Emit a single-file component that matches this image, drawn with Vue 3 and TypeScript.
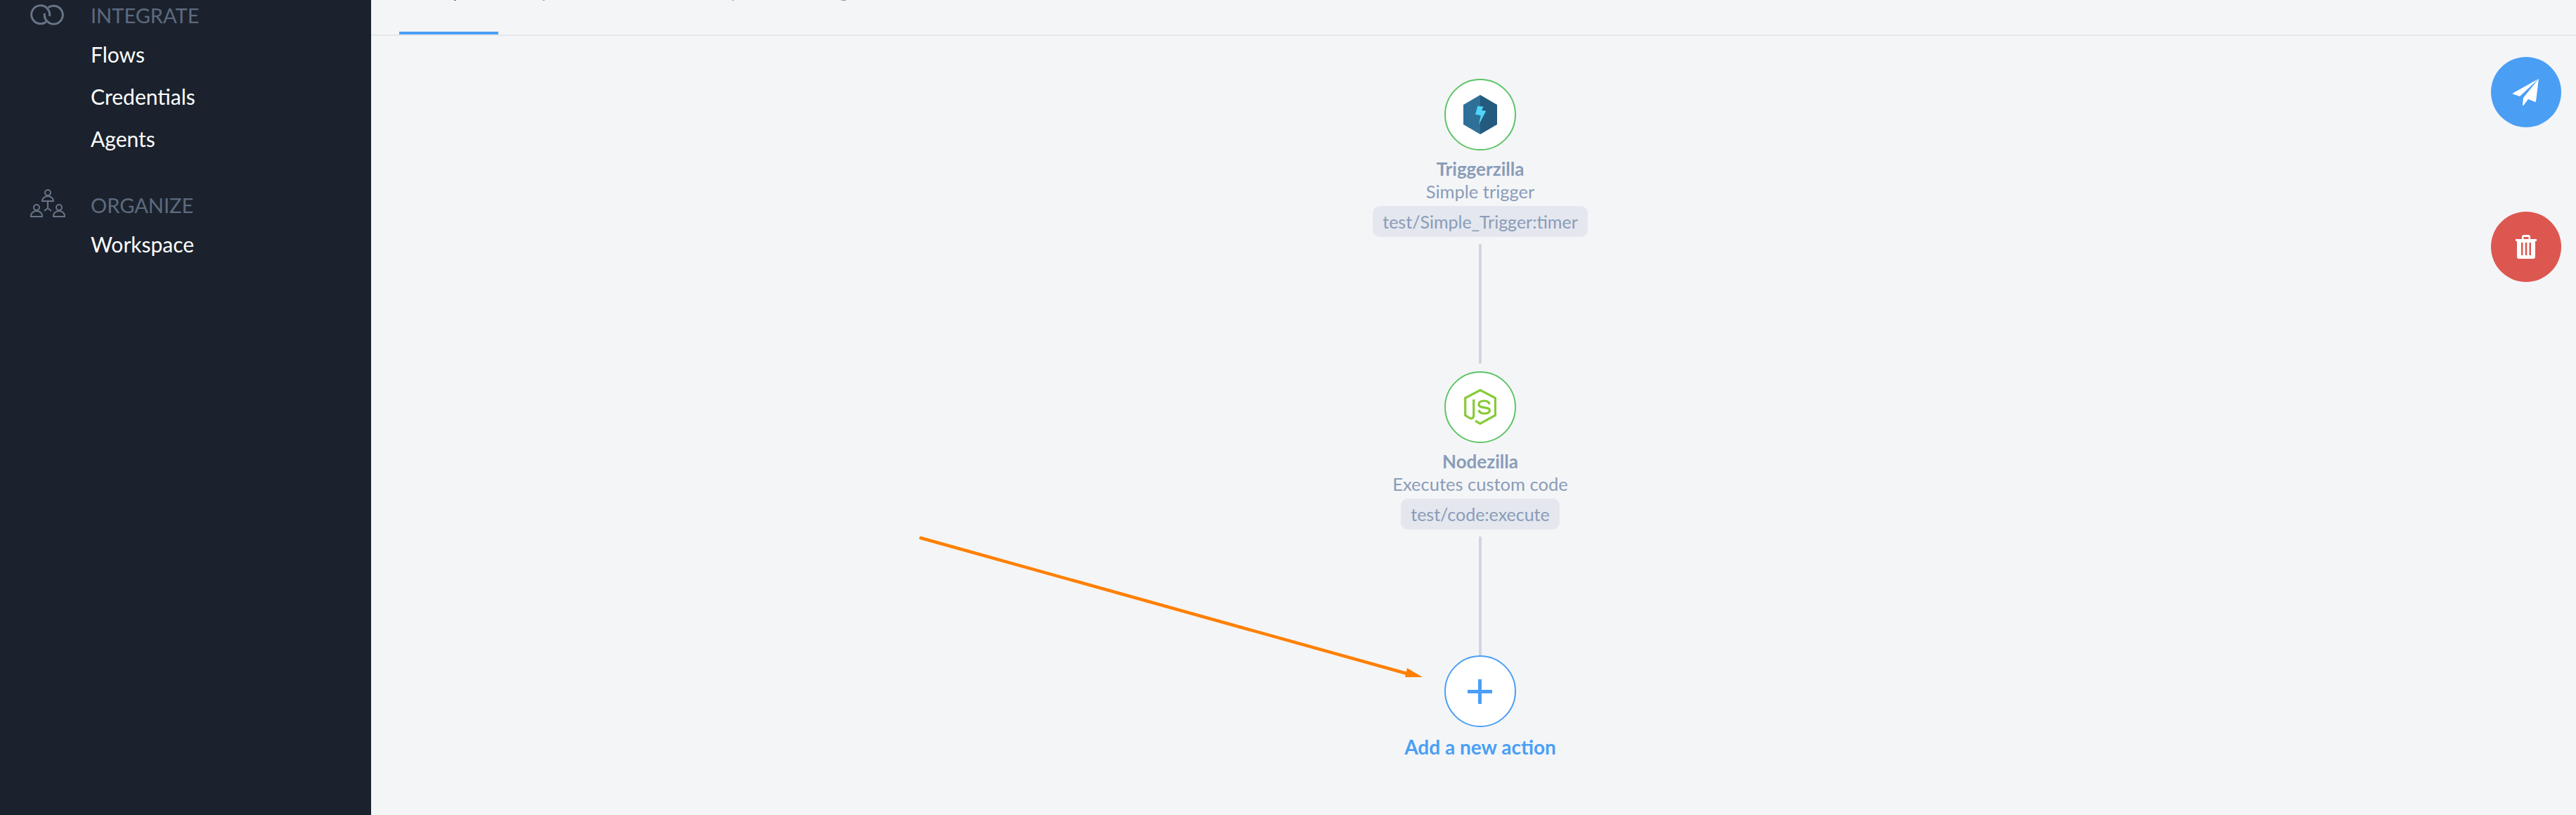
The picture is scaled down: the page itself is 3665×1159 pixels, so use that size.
<template>
  <div class="page">
    <aside class="sidebar">
      <section v-for="group in navGroups" :key="group.title" class="nav-group">
        <div class="nav-title">
          <span class="nav-icon">
            <svg v-if="group.icon === 'rings'" width="48" height="30" viewBox="0 0 48 30" fill="none" stroke="#687487" stroke-width="3">
              <path d="M22.500 25.200A13 13 0 1 1 27.500 17" />
              <path d="M25.500 4.800A13 13 0 1 1 20.500 13" />
            </svg>
            <svg v-else width="50" height="40" viewBox="0 0 50 40" fill="none" stroke="#687487" stroke-width="2">
              <circle cx="25" cy="5" r="4" />
              <path d="M17 17a8 7 0 0 1 16 0z" />
              <circle cx="9" cy="26" r="4" />
              <path d="M1 39v-1a8 7 0 0 1 16 0v1z" />
              <circle cx="41" cy="26" r="4" />
              <path d="M33 39v-1a8 7 0 0 1 16 0v1z" />
              <path d="M25 18v9M25 27l-5 4M25 27l5 4" />
            </svg>
          </span>
          {{ group.title }}
        </div>
        <a v-for="link in group.links" :key="link" class="nav-link">{{ link }}</a>
      </section>
    </aside>

    <main class="content">
      <nav class="tabs">
        <span v-for="(tab, i) in tabs" :key="tab" class="tab" :class="{ active: i === 0 }">{{ tab }}</span>
      </nav>

      <div class="canvas">
        <div class="flow">
          <div class="step">
            <div class="bubble">
              <svg width="48" height="56" viewBox="0 0 48 56">
                <path d="M24 0L0 14v28l24 14z" fill="#2f7099" />
                <path d="M24 0l24 14v28L24 56z" fill="#245a7e" />
                <path d="M20.300 15.700L28.700 16.700L26 21.700L32.300 22.700L22 42.300L24.700 29.300L17 27.700z" fill="#4fd4f9" />
              </svg>
            </div>
            <div class="step-name">Triggerzilla</div>
            <div class="step-desc">Simple trigger</div>
            <div class="step-chip">test/Simple_Trigger:timer</div>
          </div>
          <div class="connector"></div>
          <div class="step">
            <div class="bubble">
              <svg width="46" height="52" viewBox="0 0 46 52" fill="none" stroke="#86cb37" stroke-width="3.200">
                <path d="M13.700 15v22.500c0 4-3 5.500-6 3.800L1.700 37.500V13L23 1.800 44.500 13v24.500L23 49.500l-7-4" />
                <path d="M36 22c-.5-3.500-3.500-5-7.500-5-4.500 0-7.500 2-7.500 5 0 7 15.500 2.500 15.500 8.500 0 3-3 4.500-7.500 4.500-4.500 0-7.500-1.500-8-5" />
              </svg>
            </div>
            <div class="step-name">Nodezilla</div>
            <div class="step-desc">Executes custom code</div>
            <div class="step-chip">test/code:execute</div>
          </div>
          <div class="connector"></div>
          <div class="step">
            <div class="bubble bubble-add">
              <svg width="35" height="35" viewBox="0 0 35 35" fill="#4a9ff5">
                <path d="M15 0h5v15h15v5H20v15h-5V20H0v-5h15z" />
              </svg>
            </div>
            <div class="add-label">Add a new action</div>
          </div>
        </div>

        <div class="actions">
          <button class="fab fab-send" type="button">
            <svg width="38" height="38" viewBox="0 0 38 38" fill="#fff">
              <path d="M37 0L1 20a1 1 0 0 0 0 2l9 3z" />
              <path d="M37 0L15 27l-1 10a1 1 0 0 0 2 0l6-8 10 4a1 1 0 0 0 1-1z" />
            </svg>
          </button>
          <button class="fab fab-delete" type="button">
            <svg width="30" height="34" viewBox="0 0 30 34" fill="#fff">
              <path d="M0 6h9V3a3 3 0 0 1 3-3h6a3 3 0 0 1 3 3v3h9v3h-2v22a3 3 0 0 1-3 3H5a3 3 0 0 1-3-3V9H0zM11.500 6h7V3h-7zM8 11v18h2.500V11zM13.700 11v18h2.600V11zM19.500 11v18H22V11z" fill-rule="evenodd" />
            </svg>
          </button>
        </div>

        <svg class="arrow" width="740" height="220" viewBox="0 0 740 220">
          <path d="M3 5L695 198" stroke="#ff8000" stroke-width="4.500" stroke-linecap="round" fill="none" />
          <path d="M717 203L692 203L695 190z" fill="#ff8000" />
        </svg>
      </div>
    </main>
  </div>
</template>

<script setup lang="ts">
const navGroups = [
  { title: 'INTEGRATE', icon: 'rings', links: ['Flows', 'Credentials', 'Agents'] },
  { title: 'ORGANIZE', icon: 'people', links: ['Workspace'] }
];

const tabs = ['Graph', 'Properties', 'Summary', 'Settings'];
</script>

<style>
html,
body {
  margin: 0;
  background: #f4f5f7;
}
</style>

<style scoped>
.page {
  display: flex;
  height: 1159px;
  overflow: hidden;
  font-family: Lato, "Noto Sans", sans-serif;
}

.sidebar {
  flex: 0 0 528px;
  background: #1b222d;
  padding-top: 2px;
  box-sizing: border-box;
}

.nav-group {
  margin-bottom: 45px;
}

.nav-title {
  position: relative;
  height: 45px;
  padding-left: 129px;
  font-size: 29px;
  line-height: 40px;
  color: #5d6a7e;
}

.nav-icon {
  position: absolute;
  left: 43px;
  top: 3px;
}

.nav-group + .nav-group .nav-icon {
  top: -3px;
}

.nav-link {
  display: block;
  height: 60px;
  padding-left: 129px;
  font-size: 30px;
  line-height: 60px;
  color: #fff;
}

.content {
  flex: 1;
  min-width: 0;
  display: flex;
  flex-direction: column;
}

.tabs {
  display: flex;
  flex: 0 0 49px;
  padding-left: 40px;
  border-bottom: 2px solid #e6e7ea;
  align-items: flex-start;
  overflow: hidden;
}

.tab {
  margin-top: -26px;
  padding: 0 38px;
  font-size: 25px;
  line-height: 26px;
  color: #8a9cb8;
}

.tab:nth-child(2) {
  margin-left: -14px;
}

.tab:nth-child(3) {
  margin-left: 26px;
}

.tab:nth-child(4) {
  margin-left: 3px;
}

.tab.active {
  box-sizing: border-box;
  width: 141px;
  height: 75px;
  padding: 0;
  border-bottom: 4px solid #4a9ff5;
  color: #4a5568;
  text-align: center;
}

.canvas {
  position: relative;
  flex: 1;
}

.flow {
  display: flex;
  flex-direction: column;
  align-items: center;
  padding-top: 61px;
  padding-left: 19px;
  font-size: 25px;
  color: #8a9cb8;
}

.step {
  display: flex;
  flex-direction: column;
  align-items: center;
}

.bubble {
  display: flex;
  align-items: center;
  justify-content: center;
  width: 102px;
  height: 102px;
  box-sizing: border-box;
  border: 2px solid #5cc566;
  border-radius: 50%;
  background: #fff;
}

.bubble-add {
  border-color: #4a9ff5;
}

.step-name {
  margin-top: 11px;
  font-size: 26px;
  font-weight: 700;
  line-height: 31px;
}

.step-desc {
  font-size: 25.500px;
  line-height: 32px;
}

.step-chip {
  margin-top: 5px;
  padding: 0 14px;
  height: 44px;
  line-height: 44px;
  border-radius: 10px;
  background: #e4e7ee;
  font-size: 25px;
}

.connector {
  width: 4px;
  height: 170px;
  margin: 10px 0 11px;
  background: #cfd6e2;
}

.connector:nth-of-type(4) {
  height: 169px;
  margin-bottom: 0;
}

.add-label {
  margin-top: 10px;
  font-size: 28px;
  font-weight: 700;
  line-height: 36px;
  color: #4a9ff5;
}

.actions {
  position: absolute;
  top: 30px;
  right: 21px;
  display: flex;
  flex-direction: column;
  gap: 120px;
}

.fab {
  display: flex;
  align-items: center;
  justify-content: center;
  width: 100px;
  height: 100px;
  padding: 0;
  border: none;
  border-radius: 50%;
}

.fab-send {
  background: #4a9ff5;
}

.fab-delete {
  background: #dc5750;
}

.arrow {
  position: absolute;
  left: 779px;
  top: 709px;
}
</style>
